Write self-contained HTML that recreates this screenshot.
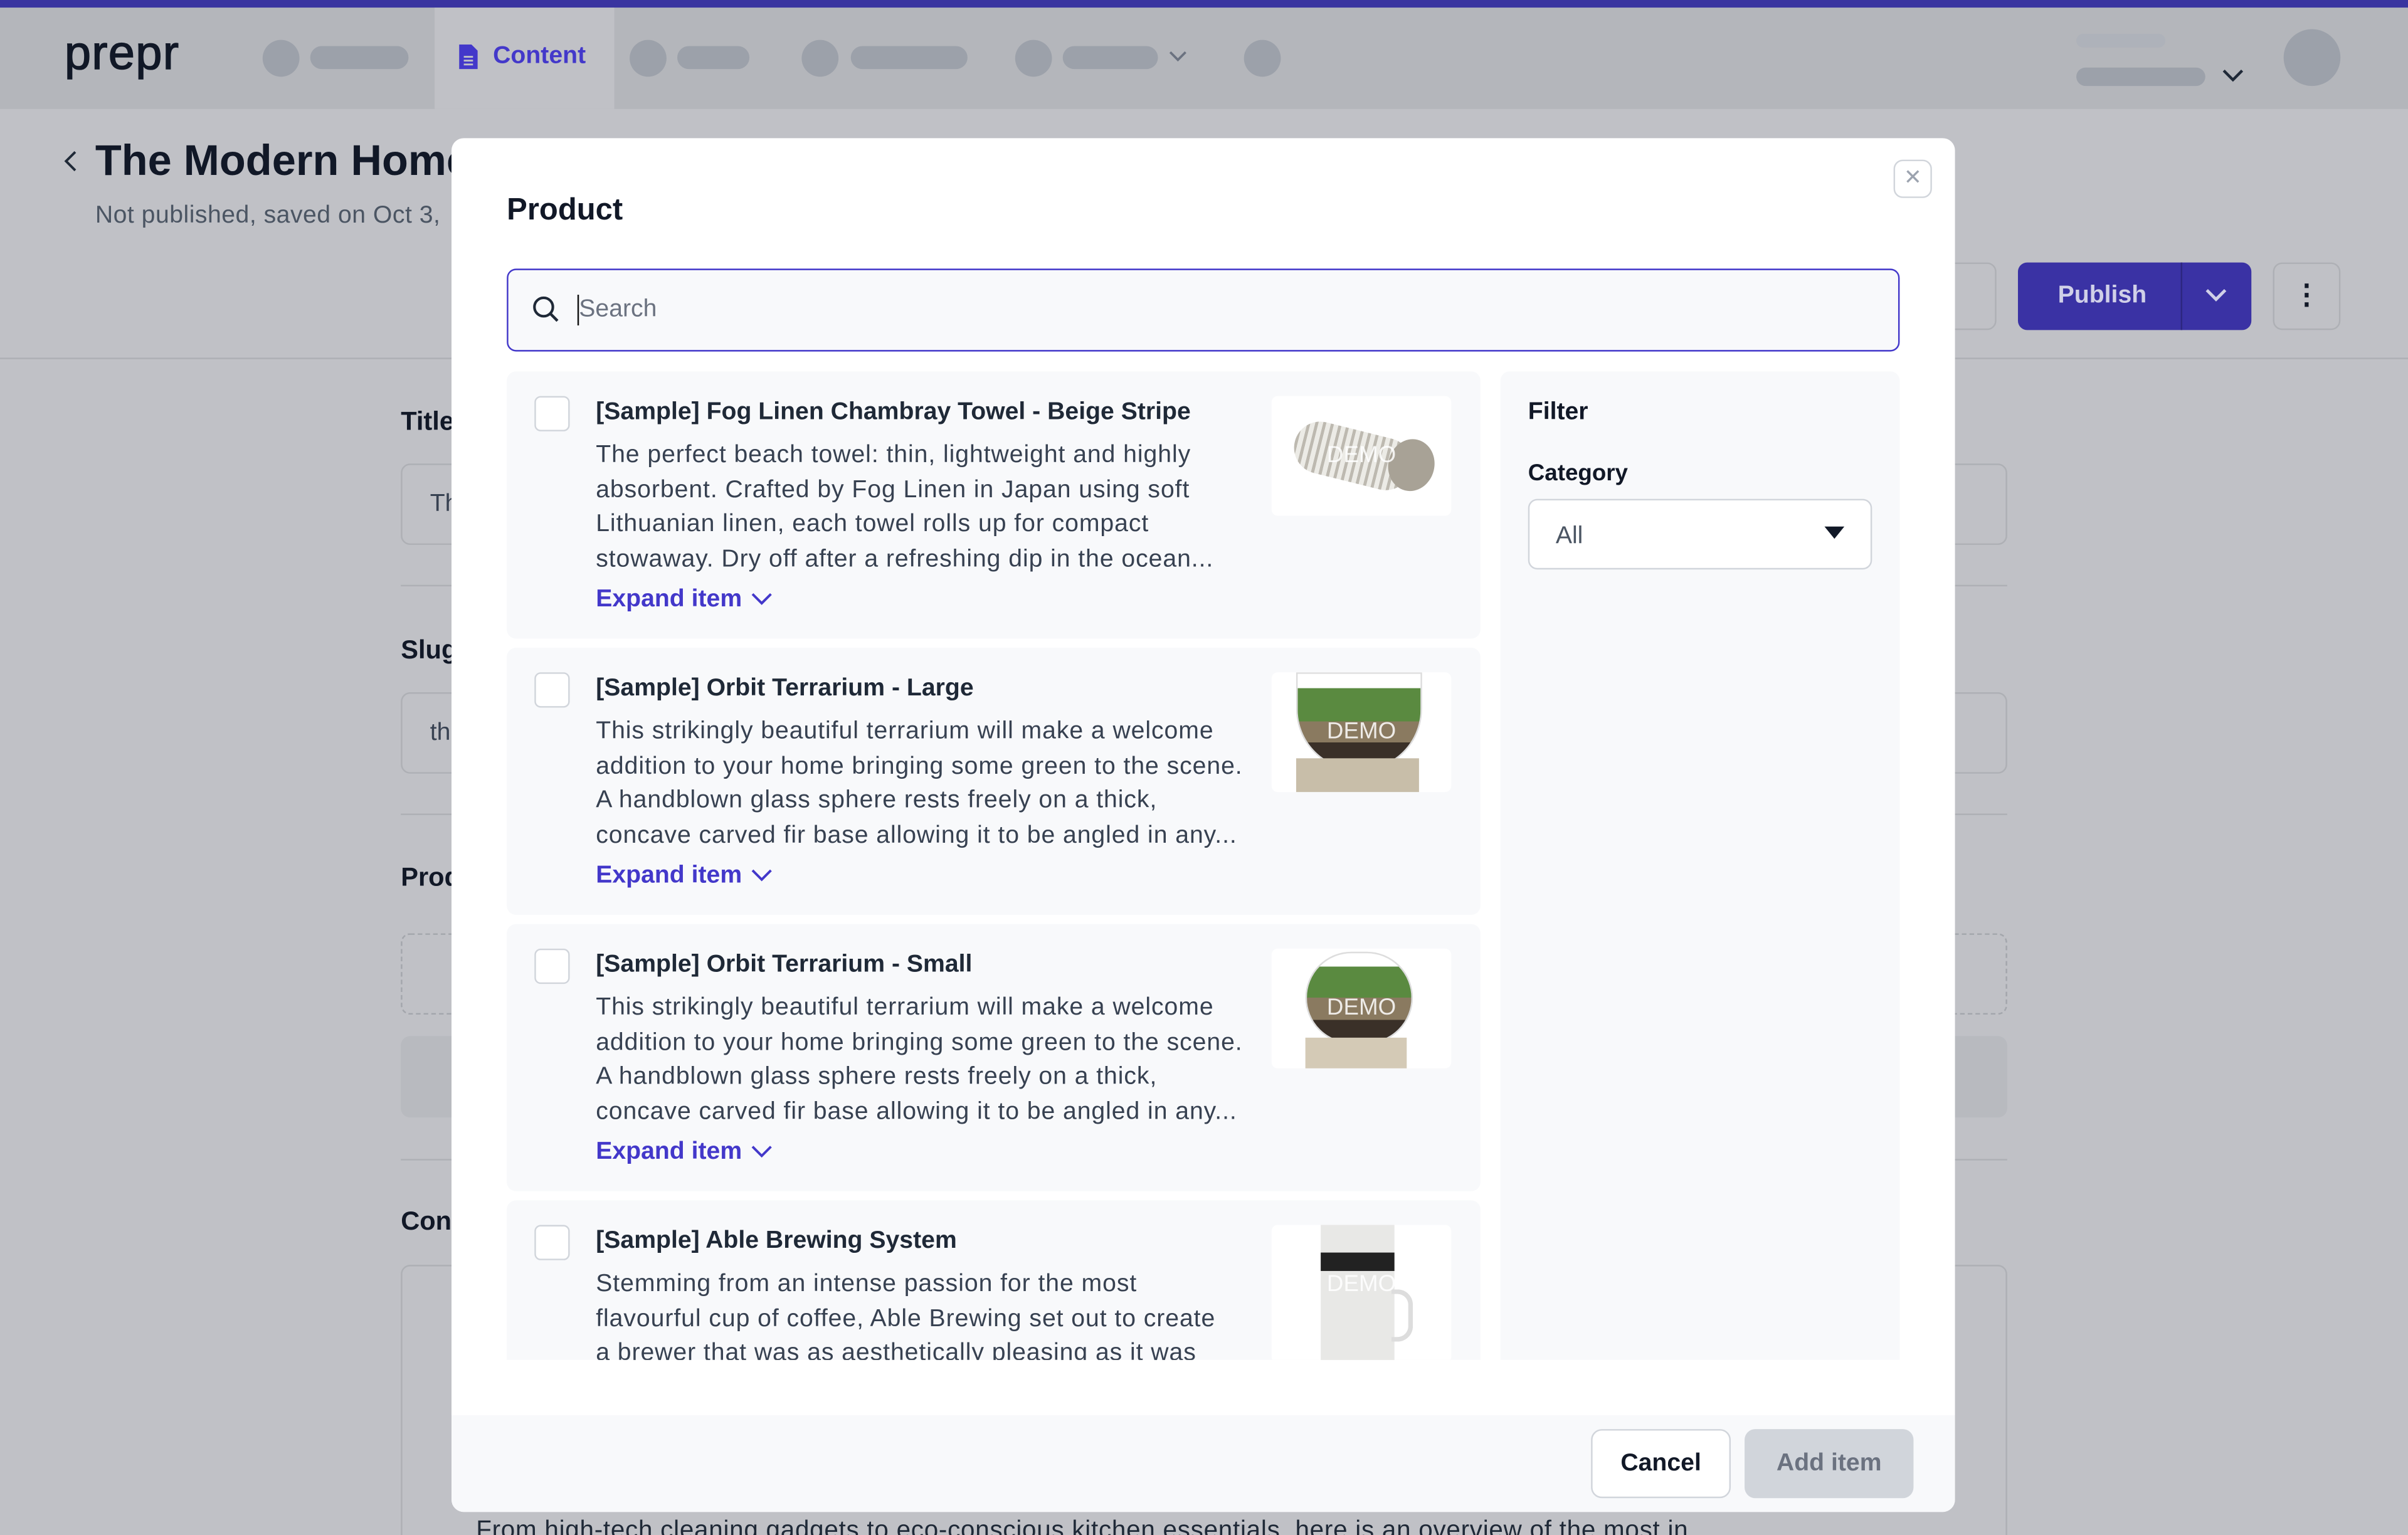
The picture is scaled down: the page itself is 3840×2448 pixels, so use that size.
<!DOCTYPE html>
<html><head><meta charset="utf-8"><style>
*{box-sizing:border-box;margin:0;padding:0}
html,body{width:3840px;height:2448px;overflow:hidden;background:#c0c1c6}
#s{position:absolute;left:0;top:0;width:1568px;height:1000px;transform:scale(2.449,2.448);transform-origin:0 0;font-family:"Liberation Sans",sans-serif;color:#111827;overflow:hidden;background:#c0c1c6}
.a{position:absolute}
.pill{position:absolute;background:#9ca1aa;border-radius:8px;height:15px}
.dot{position:absolute;background:#9ca1aa;border-radius:50%;width:24px;height:24px}
.card{position:absolute;left:330px;width:634px;background:#f8f9fb;border-radius:6px}
.cb{position:absolute;left:18px;top:16px;width:23px;height:23px;border:1.5px solid #d1d5db;border-radius:4px;background:#fff}
.t{position:absolute;left:58px;top:18px;font-size:16px;font-weight:bold;color:#1f2937}
.d{position:absolute;left:58px;top:44px;width:428px;font-size:16px;line-height:22.5px;color:#374151;letter-spacing:0.38px}
.e{position:absolute;left:58px;top:140px;font-size:16px;font-weight:bold;color:#4338ca}
.e svg{vertical-align:middle;margin-left:6px}
.im{position:absolute;left:498px;top:16px;width:117px;height:78px;background:#fff;border-radius:4px;overflow:hidden}
.demo{position:absolute;left:0;right:0;top:30px;text-align:center;color:rgba(255,255,255,.85);font-size:15px}
</style></head><body><div id="s">
<div class="a" style="left:0;top:0;width:1568px;height:5px;background:#3a34a0"></div>
<div class="a" style="left:0;top:5px;width:1568px;height:66px;background:#b4b6bb"></div>
<div class="a" style="left:283px;top:5px;width:117px;height:66px;background:#c0c1c6"></div>
<div class="a" style="left:42px;top:17px;font-size:31px;letter-spacing:0.5px;color:#111827;-webkit-text-stroke:0.6px #111827">prepr</div>
<div class="dot" style="left:171px;top:26px"></div><div class="pill" style="left:202px;top:30px;width:64px"></div>
<svg class="a" style="left:298px;top:28px" width="14" height="18" viewBox="0 0 14 18"><path d="M1 1h8l4 4v12H1z" fill="#4338ca"/><path d="M4 9h6M4 11.5h6M4 14h6" stroke="#c0c1c6" stroke-width="1.2"/></svg>
<div class="a" style="left:321px;top:28px;font-size:16px;font-weight:bold;color:#4338ca">Content</div>
<div class="dot" style="left:410px;top:26px"></div><div class="pill" style="left:441px;top:30px;width:47px"></div>
<div class="dot" style="left:522px;top:26px"></div><div class="pill" style="left:554px;top:30px;width:76px"></div>
<div class="dot" style="left:661px;top:26px"></div><div class="pill" style="left:692px;top:30px;width:62px"></div>
<svg class="a" style="left:761px;top:33px" width="12" height="8"><path d="M1 1l5 5 5-5" stroke="#6b7280" stroke-width="1.5" fill="none"/></svg>
<div class="dot" style="left:810px;top:26px"></div>
<div class="pill" style="left:1352px;top:22px;width:58px;height:9px;background:#aeb2ba"></div>
<div class="pill" style="left:1352px;top:44px;width:84px;height:12px"></div>
<svg class="a" style="left:1447px;top:44px" width="14" height="10"><path d="M1 2l6 6 6-6" stroke="#1f2937" stroke-width="1.8" fill="none"/></svg>
<div class="a" style="left:1487px;top:19px;width:37px;height:37px;border-radius:50%;background:#9ca1aa"></div>
<svg class="a" style="left:41px;top:97px" width="10" height="16"><path d="M8 2L2 8l6 6" stroke="#1f2937" stroke-width="1.6" fill="none"/></svg>
<div class="a" style="left:62px;top:89px;font-size:28px;font-weight:bold;color:#111827;white-space:nowrap">The Modern Home</div>
<div class="a" style="left:62px;top:132px;font-size:16px;color:#4b5563;white-space:nowrap;letter-spacing:0.2px">Not published, saved on Oct 3,</div>
<div class="a" style="left:0;top:233px;width:1568px;height:1px;background:#aeb0b5"></div>
<div class="a" style="left:1262px;top:171px;width:38px;height:44px;border:1px solid #aeb0b5;border-radius:6px"></div>
<div class="a" style="left:1314px;top:171px;width:152px;height:44px;background:#3a32a4;border-radius:6px"></div>
<div class="a" style="left:1420px;top:171px;width:1px;height:44px;background:#2c2680"></div>
<div class="a" style="left:1340px;top:184px;font-size:16px;font-weight:bold;color:#d0d0e8">Publish</div>
<svg class="a" style="left:1435px;top:187px" width="16" height="10"><path d="M2 2l6 6 6-6" stroke="#d0d0e8" stroke-width="2" fill="none"/></svg>
<div class="a" style="left:1480px;top:171px;width:44px;height:44px;border:1px solid #aeb0b5;border-radius:6px;text-align:center;font-size:18px;font-weight:bold;line-height:40px">⋮</div>
<div class="a" style="left:261px;top:265px;font-size:17px;font-weight:bold">Title</div>
<div class="a" style="left:261px;top:302px;width:1046px;height:53px;border:1px solid #aeb0b5;border-radius:6px"></div>
<div class="a" style="left:280px;top:320px;font-size:16px;color:#374151">Th</div>
<div class="a" style="left:261px;top:381px;width:1046px;height:1px;background:#aeb0b5"></div>
<div class="a" style="left:261px;top:414px;font-size:17px;font-weight:bold">Slug</div>
<div class="a" style="left:261px;top:451px;width:1046px;height:53px;border:1px solid #aeb0b5;border-radius:6px"></div>
<div class="a" style="left:280px;top:469px;font-size:16px;color:#374151">th</div>
<div class="a" style="left:261px;top:530px;width:1046px;height:1px;background:#aeb0b5"></div>
<div class="a" style="left:261px;top:562px;font-size:17px;font-weight:bold">Prod</div>
<div class="a" style="left:261px;top:608px;width:1046px;height:53px;border:1px dashed #a3a6ac;border-radius:6px"></div>
<div class="a" style="left:261px;top:675px;width:1046px;height:53px;background:#b8babf;border-radius:6px"></div>
<div class="a" style="left:261px;top:755px;width:1046px;height:1px;background:#aeb0b5"></div>
<div class="a" style="left:261px;top:786px;font-size:17px;font-weight:bold">Con</div>
<div class="a" style="left:261px;top:824px;width:1046px;height:200px;border:1px solid #aeb0b5;border-radius:6px"></div>
<div class="a" style="left:310px;top:988px;font-size:16.5px;color:#1f2937;white-space:nowrap;letter-spacing:0.3px">From high-tech cleaning gadgets to eco-conscious kitchen essentials, here is an overview of the most in</div>

<div class="a" style="left:294px;top:90px;width:979px;height:895px;background:#fff;border-radius:8px;overflow:hidden">
<div class="a" style="left:0;top:832px;width:979px;height:63px;background:#f8f9fb"></div>
</div>
<div class="a" style="left:1233px;top:104px;width:25px;height:25px;border:1.5px solid #d1d5db;border-radius:6px;text-align:center;line-height:21px;color:#9ca3af;font-size:14px">✕</div>
<div class="a" style="left:330px;top:126px;font-size:20px;font-weight:bold">Product</div>
<div class="a" style="left:330px;top:175px;width:907px;height:54px;border:1.5px solid #4338ca;border-radius:6px;background:#f8f9fb"></div>
<svg class="a" style="left:346px;top:192px" width="19" height="19" viewBox="0 0 19 19"><circle cx="8" cy="8" r="6" stroke="#1f2937" stroke-width="1.7" fill="none"/><path d="M12.5 12.5l4.5 4.5" stroke="#1f2937" stroke-width="1.8"/></svg>
<div class="a" style="left:376px;top:192px;width:1px;height:20px;background:#111"></div>
<div class="a" style="left:377px;top:193px;font-size:16px;color:#6b7280">Search</div>

<div class="card" style="top:242px;height:174px"><div class="cb"></div><div class="t">[Sample] Fog Linen Chambray Towel - Beige Stripe</div>
<div class="d">The perfect beach towel: thin, lightweight and highly absorbent. Crafted by Fog Linen in Japan using soft Lithuanian linen, each towel rolls up for compact stowaway. Dry off after a refreshing dip in the ocean...</div>
<div class="e">Expand item<svg width="14" height="9"><path d="M1 1l6 6 6-6" stroke="#4338ca" stroke-width="1.6" fill="none"/></svg></div>
<div class="im"><div class="a" style="left:14px;top:22px;width:78px;height:34px;border-radius:17px;background:repeating-linear-gradient(90deg,#bdb9b0 0 2px,#ecebe6 2px 5px);transform:rotate(14deg)"></div><div class="a" style="left:76px;top:28px;width:30px;height:34px;border-radius:50%;background:#a8a296;transform:rotate(14deg)"></div><div class="demo">DEMO</div></div></div>
<div class="card" style="top:422px;height:174px"><div class="cb"></div><div class="t">[Sample] Orbit Terrarium - Large</div>
<div class="d">This strikingly beautiful terrarium will make a welcome addition to your home bringing some green to the scene. A handblown glass sphere rests freely on a thick, concave carved fir base allowing it to be angled in any...</div>
<div class="e">Expand item<svg width="14" height="9"><path d="M1 1l6 6 6-6" stroke="#4338ca" stroke-width="1.6" fill="none"/></svg></div>
<div class="im"><div class="a" style="left:16px;top:0;width:82px;height:64px;border-radius:0 0 40px 40px;border:1px solid #ddd;background:linear-gradient(#fff 0 15%,#5a8a40 15% 50%,#8a7a60 50% 72%,#3a3028 72%)"></div><div class="a" style="left:16px;top:56px;width:80px;height:24px;background:#c8bea9"></div><div class="demo">DEMO</div></div></div>
<div class="card" style="top:602px;height:174px"><div class="cb"></div><div class="t">[Sample] Orbit Terrarium - Small</div>
<div class="d">This strikingly beautiful terrarium will make a welcome addition to your home bringing some green to the scene. A handblown glass sphere rests freely on a thick, concave carved fir base allowing it to be angled in any...</div>
<div class="e">Expand item<svg width="14" height="9"><path d="M1 1l6 6 6-6" stroke="#4338ca" stroke-width="1.6" fill="none"/></svg></div>
<div class="im"><div class="a" style="left:22px;top:2px;width:70px;height:60px;border-radius:35px;border:1px solid #ddd;background:linear-gradient(#fff 0 15%,#5a8a40 15% 50%,#8a7a60 50% 75%,#3a3028 75%)"></div><div class="a" style="left:22px;top:58px;width:66px;height:22px;background:#d4cab6"></div><div class="demo">DEMO</div></div></div>
<div class="card" style="top:782px;height:104px;border-radius:6px 6px 0 0;overflow:hidden"><div class="cb"></div><div class="t">[Sample] Able Brewing System</div>
<div class="d" style="width:412px">Stemming from an intense passion for the most flavourful cup of coffee, Able Brewing set out to create a brewer that was as aesthetically pleasing as it was</div>
<div class="im" style="height:90px"><div class="a" style="left:32px;top:0;width:48px;height:90px;background:#e8e8e6"></div><div class="a" style="left:32px;top:18px;width:48px;height:12px;background:#222"></div><div class="a" style="left:78px;top:42px;width:14px;height:34px;border:3px solid #ddd;border-left:none;border-radius:0 10px 10px 0"></div><div class="demo">DEMO</div></div></div>

<div class="a" style="left:977px;top:242px;width:260px;height:644px;background:#f8f9fb;border-radius:6px 6px 0 0"></div>
<div class="a" style="left:995px;top:260px;font-size:16px;font-weight:bold">Filter</div>
<div class="a" style="left:995px;top:300px;font-size:15px;font-weight:bold">Category</div>
<div class="a" style="left:995px;top:325px;width:224px;height:46px;background:#fff;border:1px solid #d1d5db;border-radius:6px"></div>
<div class="a" style="left:1013px;top:341px;font-size:16px;color:#4b5563">All</div>
<svg class="a" style="left:1188px;top:343px" width="13" height="9"><path d="M0 0h13L6.5 8z" fill="#111827"/></svg>

<div class="a" style="left:1036px;top:931px;width:91px;height:45px;border:1px solid #d1d5db;border-radius:7px;background:#fff;text-align:center;line-height:43px;font-size:16px;font-weight:bold">Cancel</div>
<div class="a" style="left:1136px;top:931px;width:110px;height:45px;border-radius:7px;background:#d1d5db;text-align:center;line-height:45px;font-size:16px;font-weight:bold;color:#6b7280">Add item</div>
</div></body></html>
